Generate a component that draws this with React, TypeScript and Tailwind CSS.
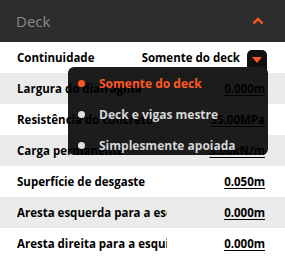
import React from "react";

const rows = [
  { label: "Continuidade", value: null, gray: false },
  { label: "Largura do diafragma", value: "0.000m", gray: true },
  { label: "Resistência do concreto", value: "35.00MPa", gray: false },
  { label: "Carga permanente", value: "3.00kN/m", gray: true },
  { label: "Superfície de desgaste", value: "0.050m", gray: false },
  { label: "Aresta esquerda para a esquina", value: "0.000m", gray: true },
  { label: "Aresta direita para a esquina", value: "0.000m", gray: false },
];

const items = [
  { t: "Somente do deck", active: true },
  { t: "Deck e vigas mestre", active: false },
  { t: "Simplesmente apoiada", active: false },
];

export default function App() {
  return (
    <div
      className="w-[285px] h-[260px] overflow-hidden bg-white relative"
      style={{ fontFamily: '"Open Sans", "Noto Sans", sans-serif' }}
    >
      <div className="h-[42px] bg-[#2d2d2d] flex items-center justify-between pl-[16px] pr-[21px]">
        <span className="text-[15px] text-[#8a8a8a]">Deck</span>
        <svg width="12" height="8" viewBox="0 0 12 8">
          <path d="M1.5 6.5 L6 2 L10.5 6.5" stroke="#ff5722" strokeWidth="2.4" fill="none" />
        </svg>
      </div>
      <div className="relative">
        {rows.map((r, i) => (
          <div
            key={i}
            className={`h-[31px] flex items-center pl-[17px] pr-[20px] text-[11.5px] font-bold text-black whitespace-nowrap ${r.gray ? "bg-[#ebebeb]" : "bg-white"}`}
          >
            {r.value ? (
              <>
                <span className="relative z-20 w-[150px] shrink-0 overflow-hidden">{r.label}</span>
                <span className="relative z-20 ml-auto underline underline-offset-[2px]">{r.value}</span>
              </>
            ) : (
              <>
                <span className="relative z-20">{r.label}</span>
                <div className="ml-auto mr-[-2px] flex items-center h-full">
                  <span className="relative z-20 mr-[7px]">Somente do deck</span>
                  <div className="relative z-10 w-[20px] h-[26px] mt-[10px] bg-[#111] rounded-t-[5px] flex justify-center pt-[7px]">
                    <svg width="10" height="6" viewBox="0 0 10 6">
                      <path d="M0 0 L10 0 L5 6 Z" fill="#ff5722" />
                    </svg>
                  </div>
                </div>
              </>
            )}
          </div>
        ))}
        <div className="absolute z-10 left-[68px] top-[25px] w-[200px] h-[88px] bg-[#1c1c1c] rounded-[6px]" />
        <div className="absolute z-30 left-[68px] top-[25px] w-[200px] h-[88px] flex flex-col pt-[1px] pl-[10px] text-[12px] font-bold whitespace-nowrap">
          {items.map((it, i) => (
            <div
              key={i}
              className={`h-[31px] shrink-0 flex items-center gap-[14px] ${it.active ? "text-[#ff5722]" : "text-[#d6d6d6]"}`}
            >
              <span className={`w-[7px] h-[7px] rounded-full ${it.active ? "bg-[#ff5722]" : "bg-[#e0e0e0]"}`} />
              <span>{it.t}</span>
            </div>
          ))}
        </div>
      </div>
    </div>
  );
}
